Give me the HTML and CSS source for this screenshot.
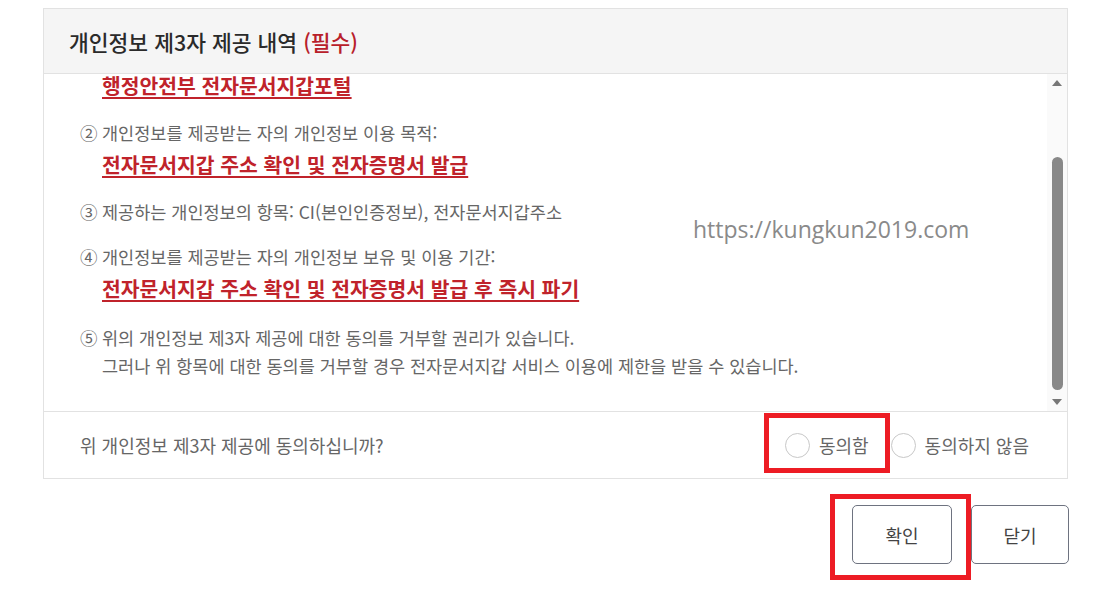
FILE: index.html
```html
<!DOCTYPE html>
<html lang="ko">
<head>
<meta charset="utf-8">
<title>개인정보 제3자 제공 내역</title>
<link rel="stylesheet" href="styles.css">
</head>
<body>
<div class="page">
  <section class="panel">
    <header class="panel-head">
      <h2 class="panel-title">개인정보 제3자 제공 내역 <span class="req">(필수)</span></h2>
    </header>
    <div class="scroll">
      <div class="scroll-body">
        <div class="scroll-inner">
          <div class="item item-cont">
            <span class="num"></span>
            <div class="body"><span class="strong strong-top">행정안전부 전자문서지갑포털</span></div>
          </div>
          <div class="item item-second">
            <span class="num">②</span>
            <div class="body">
              <p class="line">개인정보를 제공받는 자의 개인정보 이용 목적:</p>
              <span class="strong">전자문서지갑 주소 확인 및 전자증명서 발급</span>
            </div>
          </div>
          <div class="item">
            <span class="num">③</span>
            <div class="body">
              <p class="line">제공하는 개인정보의 항목: CI(본인인증정보), 전자문서지갑주소</p>
            </div>
          </div>
          <div class="item">
            <span class="num">④</span>
            <div class="body">
              <p class="line">개인정보를 제공받는 자의 개인정보 보유 및 이용 기간:</p>
              <span class="strong">전자문서지갑 주소 확인 및 전자증명서 발급 후 즉시 파기</span>
            </div>
          </div>
          <div class="item item-last">
            <span class="num">⑤</span>
            <div class="body">
              <p class="line">위의 개인정보 제3자 제공에 대한 동의를 거부할 권리가 있습니다.</p>
              <p class="line">그러나 위 항목에 대한 동의를 거부할 경우 전자문서지갑 서비스 이용에 제한을 받을 수 있습니다.</p>
            </div>
          </div>
        </div>
      </div>
      <div class="scrollbar">
        <div class="sb-btn"><span class="tri tri-up"></span></div>
        <div class="sb-track"><div class="sb-thumb"></div></div>
        <div class="sb-btn"><span class="tri tri-down"></span></div>
      </div>
      <div class="watermark">https://kungkun2019.com</div>
    </div>
    <div class="consent">
      <p class="consent-q">위 개인정보 제3자 제공에 동의하십니까?</p>
      <div class="options">
        <label class="opt"><span class="radio"></span><span>동의함</span></label>
        <label class="opt"><span class="radio"></span><span>동의하지 않음</span></label>
      </div>
    </div>
  </section>
  <div class="actions">
    <button class="btn btn-ok">확인</button>
    <button class="btn btn-close">닫기</button>
  </div>
  <div class="mark mark-1"></div>
  <div class="mark mark-2"></div>
</div>
</body>
</html>
```

FILE: styles.css
```css
* { box-sizing: border-box; }
html, body { margin: 0; padding: 0; background: #fff; }
body {
  font-family: "Noto Sans CJK KR", "Noto Sans", sans-serif;
  color: #666;
}
.page {
  position: relative;
  width: 1107px;
  height: 607px;
  padding: 8px 39px 0 43px;
}
.panel {
  border: 1px solid #e2e2e2;
  background: #fff;
}
.panel-head {
  height: 65px;
  background: #f5f5f5;
  border-bottom: 1px solid #e2e2e2;
  display: flex;
  align-items: center;
  padding-left: 25px;
}
.panel-title {
  margin: 0;
  font-size: 21.5px;
  font-weight: 500;
  color: #2a2a2a;
  letter-spacing: 0;
}
.req { color: #b8202a; }

.scroll {
  position: relative;
  height: 338px;
  display: flex;
  border-bottom: 1px solid #e2e2e2;
}
.scroll-body {
  flex: 1;
  overflow: hidden;
  padding-left: 36px;
}
.item {
  display: flex;
  margin-top: 17px;
}
.item-cont { margin-top: 0; }
.item-second { margin-top: 20px; }
.item-last { margin-top: 19px; }
.num {
  flex: none;
  width: 22px;
  font-size: 17.5px;
  line-height: 28px;
}
.body { flex: 1; }
.line {
  margin: 0;
  font-size: 17.5px;
  line-height: 28px;
  color: #666;
}
.strong {
  display: inline-block;
  font-size: 20.4px;
  line-height: 34px;
  font-weight: 700;
  color: #c0232b;
  text-decoration: underline;
  text-decoration-thickness: 2px;
  text-underline-offset: 3px;
}
.strong-top { line-height: 22px; }

.scrollbar {
  flex: none;
  width: 20px;
  background: #fafafa;
  display: flex;
  flex-direction: column;
}
.sb-btn {
  height: 18px;
  display: flex;
  align-items: center;
  justify-content: center;
}
.tri {
  width: 0;
  height: 0;
  border-left: 5px solid transparent;
  border-right: 5px solid transparent;
}
.tri-up { border-bottom: 6px solid #777; }
.tri-down { border-top: 6px solid #777; }
.sb-track {
  flex: 1;
  display: flex;
  justify-content: center;
}
.sb-thumb {
  margin-top: 65px;
  width: 11px;
  height: 233px;
  border-radius: 6px;
  background: #888;
}
.watermark {
  position: absolute;
  left: 649px;
  top: 140px;
  font-family: "Open Sans", "Noto Sans", sans-serif;
  font-size: 23px;
  line-height: 30px;
  color: #8a8a8a;
}

.consent {
  height: 66px;
  display: flex;
  align-items: center;
  justify-content: space-between;
  padding: 0 38px 0 36px;
}
.consent-q {
  margin: 0;
  font-size: 18px;
  color: #666;
}
.options {
  display: flex;
  align-items: center;
  gap: 22px;
}
.opt {
  display: flex;
  align-items: center;
  gap: 9px;
  font-size: 18px;
  color: #666;
}
.radio {
  width: 25px;
  height: 25px;
  border: 1px solid #c8c8c8;
  border-radius: 50%;
  background: #fff;
}

.actions {
  display: flex;
  justify-content: flex-end;
  gap: 19px;
  margin-top: 26px;
  margin-right: -1px;
}
.btn {
  height: 59px;
  border: 1px solid #6e7380;
  border-radius: 5px;
  background: #fff;
  font-family: "Noto Sans CJK KR", "Noto Sans", sans-serif;
  font-size: 18px;
  color: #444;
  padding: 0;
}
.btn-ok { width: 100px; }
.btn-close { width: 98px; }

.mark {
  position: absolute;
  border: 5px solid #ed1c24;
}
.mark-1 { left: 764px; top: 413px; width: 126px; height: 60px; }
.mark-2 { left: 830px; top: 494px; width: 141px; height: 86px; }
```
